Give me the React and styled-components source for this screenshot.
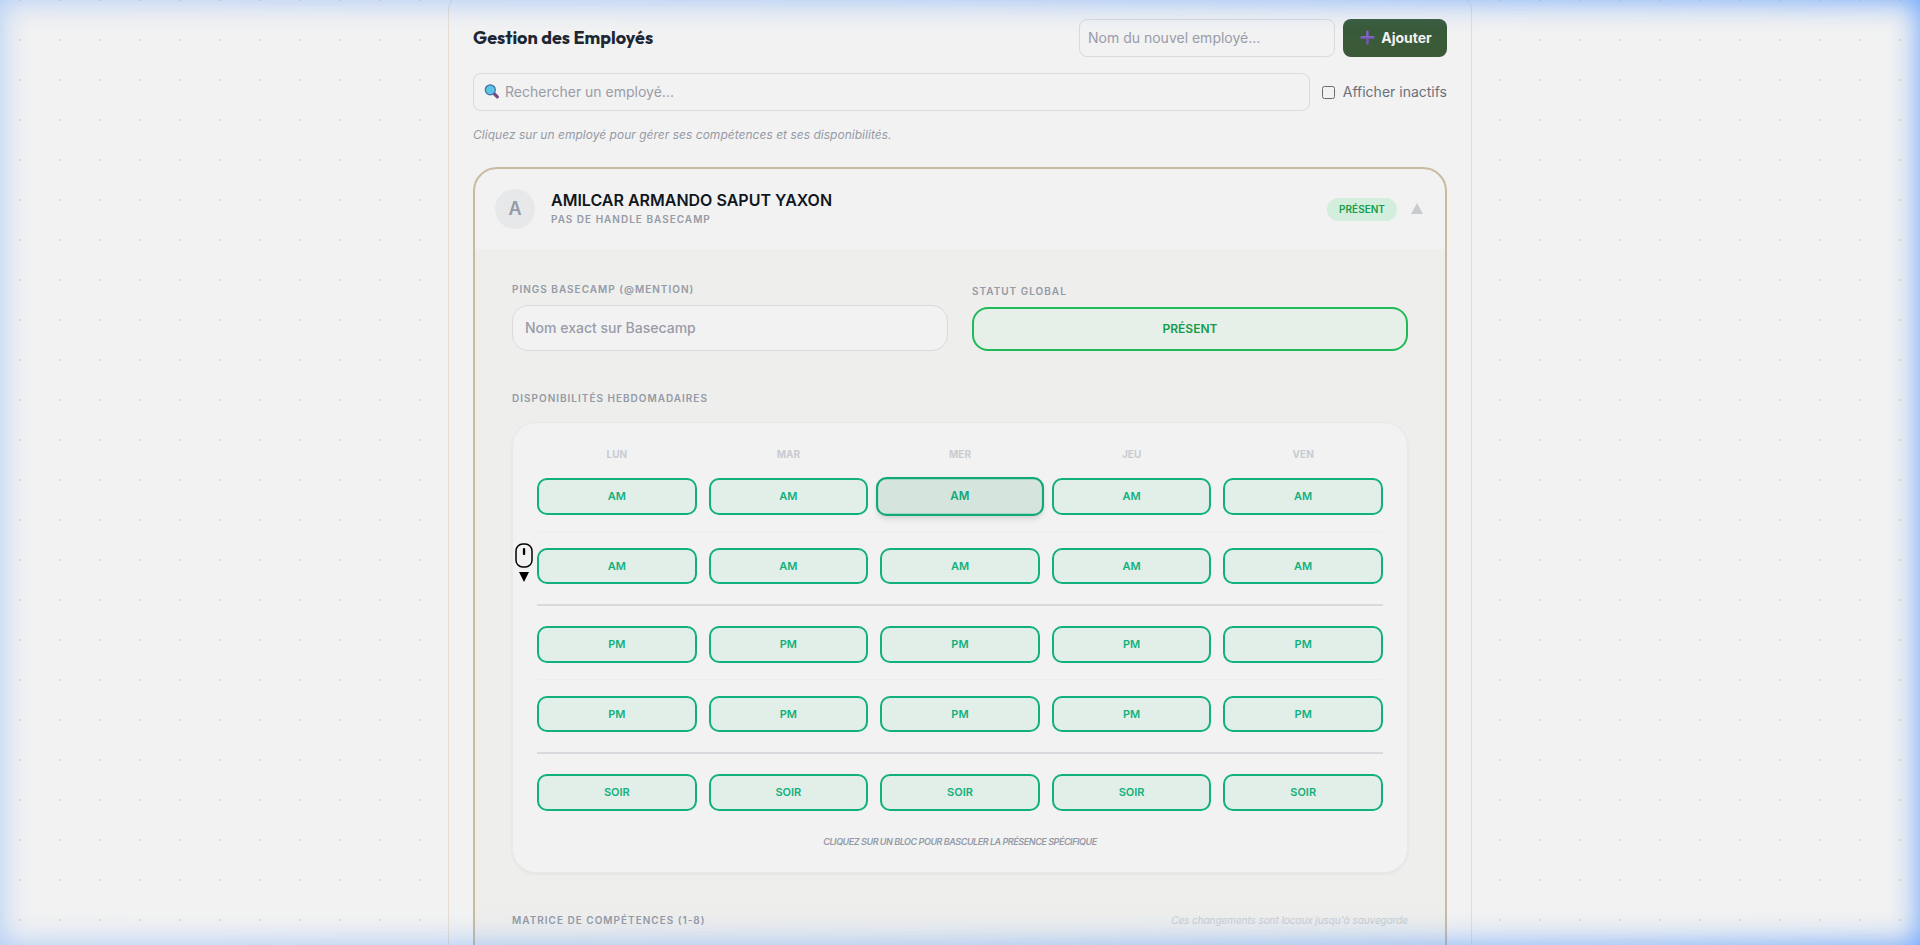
import React from 'react';
import styled, { createGlobalStyle, css } from 'styled-components';

const GlobalStyle = createGlobalStyle`
  * {
    box-sizing: border-box;
  }
  body {
    margin: 0;
    overflow: hidden;
    font-family: Inter, 'Liberation Sans', sans-serif;
    background: #f2f2f2;
  }
  input, button {
    font-family: inherit;
  }
`;

const Page = styled.div`
  height: 945px;
  overflow: hidden;
  display: flex;
  justify-content: center;
  align-items: flex-start;
  background-color: #f2f2f2;
  background-image: radial-gradient(#e3dac8 1px, transparent 1px);
  background-size: 40px 40px;
  background-position: 0 -20px;
`;

// blue light coming from the edges of the window, stronger on the right
const Glow = styled.div`
  position: fixed;
  inset: 0;
  z-index: 10;
  pointer-events: none;
  box-shadow: inset 0 0 30px rgba(80, 150, 255, 0.9);
  mask-image: linear-gradient(to right, rgba(0, 0, 0, 0.48), rgba(0, 0, 0, 0.64) 50%, #000);
`;

const Panel = styled.main`
  width: 1024px;
  height: 1100px;
  flex-shrink: 0;
  margin-top: -6px;
  padding: 24px;
  border: 1px solid #e6ddd0;
  border-radius: 16px;
  background-color: #f2f2f2;
`;

const TopRow = styled.div`
  display: flex;
  justify-content: space-between;
  align-items: center;
  height: 38px;
  margin-bottom: 16px;
`;

const Title = styled.h2`
  margin: 0;
  padding-bottom: 2px;
  font-family: Outfit, Lato, sans-serif;
  font-size: 18px;
  font-weight: 700;
  color: #1d2733;
`;

const AddForm = styled.div`
  display: flex;
  gap: 8px;
`;

const Field = styled.label`
  display: flex;
  align-items: center;
  gap: 6px;
  height: 38px;
  padding: 0 ${props => props.pad || '8px'} 1px;
  border: 1px solid #d9dadd;
  border-radius: 8px;

  ${props =>
    props.width &&
    css`
      width: ${props.width};
    `}
  ${props =>
    props.grow &&
    css`
      flex: 1;
    `}
  ${props =>
    props.rounded &&
    css`
      height: 46px;
      border-radius: 16px;
      background-color: #f2f2f2;
    `}
`;

const Input = styled.input`
  flex: 1;
  min-width: 0;
  padding: 0;
  border: 0;
  outline: 0;
  background: transparent;
  font-size: 14px;
  font-weight: ${props => props.weight || 400};

  &::placeholder {
    color: #999ca8;
    opacity: 1;
  }
`;

const AddButton = styled.button`
  display: flex;
  align-items: center;
  justify-content: center;
  gap: 6px;
  width: 104px;
  height: 38px;
  padding: 0 0 1px 2px;
  border: 0;
  border-radius: 8px;
  background-color: #3a5a38;
  color: #f2f2f2;
  font-size: 14px;
  font-weight: 700;
`;

const SearchRow = styled.div`
  display: flex;
  align-items: center;
  gap: 12px;
`;

const CheckLabel = styled.label`
  display: flex;
  align-items: center;
  gap: 8px;
  font-size: 14px;
  color: #6a717d;

  input {
    appearance: none;
    width: 13px;
    height: 13px;
    margin: 0;
    border: 1px solid #6b6b6b;
    border-radius: 2.5px;
  }

  span {
    padding-bottom: 1px;
  }
`;

const Hint = styled.p`
  margin: 16px 0 24px;
  font-size: 12px;
  line-height: 16px;
  font-style: italic;
  letter-spacing: 0.02px;
  color: #959aa6;
`;

const Card = styled.section`
  height: 1000px;
  border: 2px solid #c9bb9f;
  border-radius: 24px;
  overflow: hidden;
`;

const CardHeader = styled.header`
  display: flex;
  align-items: center;
  height: 80px;
  padding: 0 20px;
`;

const Avatar = styled.div`
  display: flex;
  align-items: center;
  justify-content: center;
  width: 40px;
  height: 40px;
  padding-bottom: 1px;
  border-radius: 50%;
  background-color: #e6e8ea;
  color: #949ba6;
  font-size: 18px;
  font-weight: 600;
`;

const Identity = styled.div`
  flex: 1;
  margin-left: 16px;
`;

const Name = styled.div`
  margin-top: -1px;
  padding-bottom: 2px;
  font-size: 16px;
  line-height: 20px;
  font-weight: 600;
  color: #101722;
`;

const Label = styled.div`
  font-size: 10px;
  line-height: 15px;
  font-weight: 600;
  letter-spacing: 1px;
  text-transform: uppercase;
  color: #949aa6;
`;

const Badge = styled.span`
  display: flex;
  align-items: center;
  justify-content: center;
  width: 70px;
  height: 23px;
  border-radius: 12px;
  background-color: #d3eedd;
  color: #159b4a;
  font-size: 10px;
  font-weight: 600;
`;

const Chevron = styled.svg`
  width: 12px;
  height: 11px;
  margin: 0 2px 2px 14px;
`;

const CardBody = styled.div`
  height: 100%;
  padding: 33px 37px;
  background-color: #eeeeec;
`;

const TwoCols = styled.div`
  display: grid;
  grid-template-columns: 1fr 1fr;
  gap: 24px;
  align-items: end;
  margin-bottom: 40px;

  ${Label} {
    margin-bottom: 8px;
  }
`;

const StatusButton = styled.button`
  display: block;
  width: 100%;
  height: 44px;
  padding: 0 0 1px;
  border: 2px solid #20ba5a;
  border-radius: 16px;
  background-color: #e6f0e8;
  color: #159b4a;
  font-size: 12px;
  font-weight: 600;
`;

const Week = styled.div`
  position: relative;
  height: 451px;
  margin: 16px 0 40px;
  padding: 24px;
  border: 1px solid #e8e9ea;
  border-radius: 24px;
  background-color: #f2f2f2;
  box-shadow: 0 1px 3px rgba(0, 0, 0, 0.06);
`;

const Days = styled.div`
  display: grid;
  grid-template-columns: repeat(5, 1fr);
  gap: 12px;
`;

const Day = styled.div`
  margin-bottom: 16.2px;
  font-size: 10px;
  line-height: 15px;
  font-weight: 700;
  text-align: center;
  color: #c8ccd1;
`;

const Slot = styled.button`
  height: 36.5px;
  padding: 0;
  border: 2px solid #12b07c;
  border-radius: 10px;
  background-color: #e1efe8;
  color: #12b07c;
  font-size: 11px;
  font-weight: 600;

  ${props =>
    props.active &&
    css`
      transform: scale(1.05);
      border-color: #11a877;
      background-color: #d5e4dd;
      color: #11a877;
      box-shadow: 0 4px 6px -1px rgba(0, 0, 0, 0.1), 0 2px 4px -1px rgba(0, 0, 0, 0.06);
    `}
`;

const Divider = styled.div`
  height: ${props => (props.strong ? '2px' : '1px')};
  margin: ${props => (props.strong ? '20px' : '16px')} 0;
  background-color: ${props => (props.strong ? '#d9dade' : '#ededee')};
`;

const Note = styled.p`
  margin: 24px 0 0;
  font-size: 9px;
  line-height: 13.5px;
  font-weight: 600;
  font-style: italic;
  letter-spacing: -0.45px;
  text-align: center;
  color: #949aa6;
`;

const MatrixRow = styled.div`
  display: flex;
  justify-content: space-between;
`;

const LocalNote = styled.span`
  font-size: 10px;
  line-height: 15px;
  font-style: italic;
  letter-spacing: -0.07px;
  color: #c8ccd1;
`;

const ScrollMarker = styled.svg`
  position: absolute;
  left: 2px;
  top: 119px;
  width: 19px;
  height: 41px;
`;

const DAYS = ['LUN', 'MAR', 'MER', 'JEU', 'VEN'];
const ROWS = [
  { name: 'AM', after: 'thin', active: 2 },
  { name: 'AM', after: 'strong' },
  { name: 'PM', after: 'thin' },
  { name: 'PM', after: 'strong' },
  { name: 'SOIR' },
];

const SearchIcon = () => (
  <svg width="15" height="15" viewBox="-0.5 0 15 15">
    <path d="M9.5 9.5 L12.8 12.8" stroke="#7d4686" strokeWidth="3.2" strokeLinecap="round" />
    <circle cx="5.8" cy="5.8" r="5" fill="#5cc5e4" stroke="#3f6fa8" strokeWidth="1.2" />
  </svg>
);

const PlusIcon = () => (
  <svg width="15" height="15" viewBox="0 0 15 15">
    <path d="M7.5 1.4V13.6M1.4 7.5H13.6" stroke="#7a55bd" strokeWidth="2.4" strokeLinecap="round" />
    <path d="M7 1.4V6.7M1.4 6.8H6.6M8.2 6.8H13.4" stroke="#9078c4" strokeWidth="0.8" strokeLinecap="round" />
  </svg>
);

const App = () => {
  return (
    <Page>
      <GlobalStyle />
      <Panel>
        <TopRow>
          <Title>Gestion des Employés</Title>
          <AddForm>
            <Field width="256px"><Input placeholder="Nom du nouvel employé..." /></Field>
            <AddButton><PlusIcon />Ajouter</AddButton>
          </AddForm>
        </TopRow>
        <SearchRow>
          <Field grow pad="10px"><SearchIcon /><Input placeholder="Rechercher un employé..." /></Field>
          <CheckLabel><input type="checkbox" /><span>Afficher inactifs</span></CheckLabel>
        </SearchRow>
        <Hint>Cliquez sur un employé pour gérer ses compétences et ses disponibilités.</Hint>
        <Card>
          <CardHeader>
            <Avatar>A</Avatar>
            <Identity>
              <Name>AMILCAR ARMANDO SAPUT YAXON</Name>
              <Label>Pas de handle Basecamp</Label>
            </Identity>
            <Badge>PRÉSENT</Badge>
            <Chevron viewBox="0 0 12 11"><path d="M6 0 L12 11 H0 Z" fill="#c8cbd0" /></Chevron>
          </CardHeader>
          <CardBody>
            <TwoCols>
              <div>
                <Label>Pings Basecamp (@mention)</Label>
                <Field rounded pad="12px"><Input weight={500} placeholder="Nom exact sur Basecamp" /></Field>
              </div>
              <div>
                <Label>Statut global</Label>
                <StatusButton>PRÉSENT</StatusButton>
              </div>
            </TwoCols>
            <Label>Disponibilités hebdomadaires</Label>
            <Week>
              <Days>
                {DAYS.map(day => <Day key={day}>{day}</Day>)}
              </Days>
              {ROWS.map((row, i) => (
                <React.Fragment key={i}>
                  <Days>
                    {DAYS.map((day, j) => (
                      <Slot key={day} active={row.active === j ? 1 : undefined}>{row.name}</Slot>
                    ))}
                  </Days>
                  {row.after && <Divider strong={row.after === 'strong' ? 1 : undefined} />}
                </React.Fragment>
              ))}
              <Note>CLIQUEZ SUR UN BLOC POUR BASCULER LA PRÉSENCE SPÉCIFIQUE</Note>
              <ScrollMarker viewBox="0 0 19 41">
                <rect x="1" y="2" width="16" height="23" rx="6.8" fill="#f2f2f2" stroke="#000" strokeWidth="1.5" />
                <rect x="7.9" y="6" width="2.3" height="7" rx="1" fill="#000" />
                <path d="M4 30 H14 L9 40 Z" fill="#000" />
              </ScrollMarker>
            </Week>
            <MatrixRow>
              <Label>Matrice de compétences (1-8)</Label>
              <LocalNote>Ces changements sont locaux jusqu'à sauvegarde</LocalNote>
            </MatrixRow>
          </CardBody>
        </Card>
      </Panel>
      <Glow />
    </Page>
  );
};

export default App;
